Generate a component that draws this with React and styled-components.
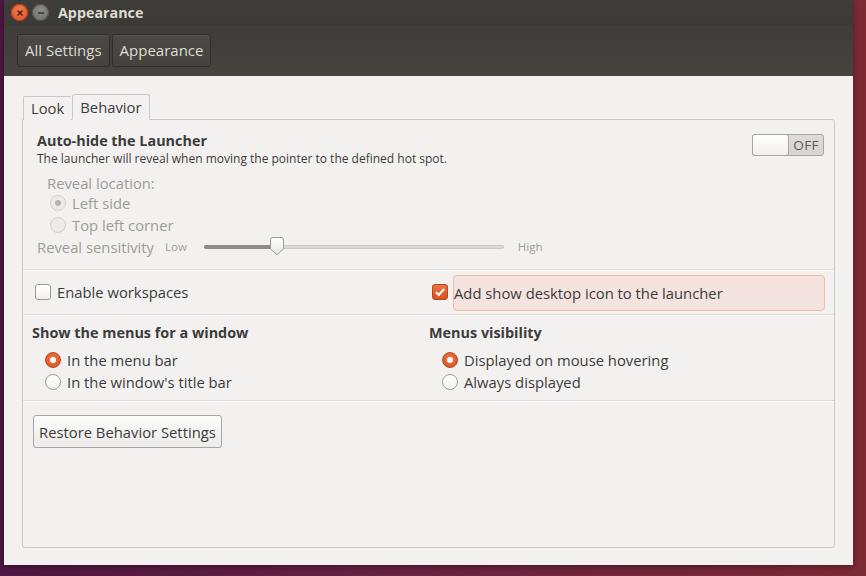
import React from "react";
import styled, { createGlobalStyle } from "styled-components";

const Global = createGlobalStyle`
  html, body { margin: 0; padding: 0; }
  body {
    width: 866px; height: 576px; overflow: hidden;
    background: linear-gradient(90deg, #4e1642 0%, #6a2240 50%, #7c2a34 100%);
    font-family: "Open Sans", "Noto Sans", sans-serif;
  }
`;

const Window = styled.div`
  margin-left: 4px;
  width: 849px;
  height: 565px;
  display: flex;
  flex-direction: column;
  background: #f2f1f0;
  box-shadow: 0 2px 6px rgba(0,0,0,0.35);
`;

const TitleBar = styled.div`
  height: 25px;
  background: linear-gradient(#3e3d39, #3b3a36);
  display: flex;
  align-items: center;
  padding-left: 7px;
  gap: 4px;
`;

const WinBtn = styled.div`
  width: 17px; height: 17px; border-radius: 50%;
  display: flex; align-items: center; justify-content: center;
  background: ${p => p.$close ? "radial-gradient(circle at 50% 35%, #f47a52, #e0501f)" : "radial-gradient(circle at 50% 35%, #8c8b86, #6c6b66)"};
  box-shadow: inset 0 0 0 1px ${p => p.$close ? "#b43c14" : "#4f4e4a"};
`;

const TitleText = styled.div`
  margin-left: 5px;
  color: #dfdbd2;
  font-weight: 700;
  font-size: 14.3px;
`;

const ToolBar = styled.div`
  height: 51px;
  box-sizing: border-box;
  background: linear-gradient(#3e3d39, #45443f);
  display: flex;
  align-items: flex-start;
  padding: 9px 0 0 13px;
  gap: 2px;
`;

const ToolButton = styled.div`
  height: 33px;
  box-sizing: border-box;
  padding: 0 7px 1px;
  border: 1px solid #2f2e2b;
  border-radius: 3px;
  background: linear-gradient(#4a4944, #44433f);
  box-shadow: inset 0 1px 0 rgba(255,255,255,0.06);
  color: #dfdbd2;
  font-size: 15px;
  display: flex; align-items: center;
`;

const Content = styled.div`
  flex: 1;
  display: flex;
  flex-direction: column;
  padding: 19px 18px 17px 18px;
  min-height: 0;
`;

const Tabs = styled.div`
  display: flex;
  align-items: flex-end;
  height: 25px;
  gap: 1px;
  padding-left: 1px;
  position: relative;
  z-index: 1;
  margin-bottom: -1px;
`;

const Tab = styled.div`
  box-sizing: border-box;
  height: ${p => p.$active ? 26 : 24}px;
  padding: 0 7px ${p => p.$active ? 0 : 1}px;
  font-size: 14.8px;
  color: #3c3c3c;
  display: flex; align-items: center;
  border: 1px solid #cbc8c4;
  border-bottom: ${p => p.$active ? "1px solid #f2f1f0" : "none"};
  border-right: ${p => p.$active ? "1px solid #cbc8c4" : "none"};
  border-radius: ${p => p.$active ? "3px 3px 0 0" : "2px 0 0 0"};
  background: #f2f1f0;
`;

const Frame = styled.div`
  flex: 1;
  border: 1px solid #cbc8c4;
  border-radius: 0 3px 3px 3px;
  display: flex;
  flex-direction: column;
`;

const Section = styled.div`
  border-bottom: ${p => p.$last ? "none" : "1px solid #dedbd8"};
  box-shadow: ${p => p.$last ? "none" : "0 1px 0 #fbfbfa"};
  ${p => p.$grow ? "flex: 1;" : ""}
  padding: ${p => p.$pad};
  box-sizing: border-box;
  height: ${p => p.$h ? p.$h + "px" : "auto"};
`;

const HeaderRow = styled.div`
  display: flex;
  justify-content: space-between;
  align-items: flex-start;
`;

const Bold = styled.div`
  font-weight: 700;
  font-size: 14.4px;
  color: #3c3c3c;
  line-height: 20px;
`;

const Sub = styled.div`
  font-size: 12px;
  color: #3c3c3c;
  line-height: 16px;
`;

const Switch = styled.div`
  width: 72px; height: 22px;
  box-sizing: border-box;
  border: 1px solid #a9a6a1;
  border-radius: 3px;
  background: linear-gradient(#dedcd8, #d6d4cf);
  display: flex;
  align-items: stretch;
  margin-top: 3px;
`;

const Knob = styled.div`
  width: 35px;
  margin: -1px 0 -1px -1px;
  border: 1px solid #a9a6a1;
  border-radius: 3px;
  background: linear-gradient(#ffffff, #f1f0ee);
`;

const SwitchLabel = styled.div`
  flex: 1;
  font-size: 13.5px;
  color: #5a5a5a;
  display: flex; align-items: center; justify-content: center;
  letter-spacing: 0.3px;
`;

const Disabled = styled.div`
  color: #9f9c98;
  font-size: 14.8px;
  line-height: ${p => p.$lh || 22}px;
  display: flex;
  align-items: center;
  gap: ${p => p.$gap || 0}px;
  padding-left: ${p => p.$indent || 0}px;
  margin-top: ${p => p.$mt || 0}px;
`;

const RadioCircle = styled.span`
  width: 16px; height: 16px; box-sizing: border-box;
  border-radius: 50%;
  display: inline-flex; align-items: center; justify-content: center;
  flex: none;
  ${p => p.$state === "on" ? `
    background: radial-gradient(circle at 50% 40%, #f07746, #d6501f);
    border: 1px solid #b5451b;
  ` : p.$state === "dis" || p.$state === "disOn" ? `
    background: #ecebe9;
    border: 1px solid #d2d0cc;
  ` : `
    background: linear-gradient(#ffffff, #f2f1ef);
    border: 1px solid #9e9b97;
  `}
`;

const Dot = styled.span`
  width: 6px; height: 6px; border-radius: 50%;
  background: ${p => p.$dis ? "#b8b5b1" : "#ffffff"};
`;

const Radio = ({ state }) => (
  <RadioCircle $state={state}>
    {state === "on" && <Dot />}
    {state === "disOn" && <Dot $dis />}
  </RadioCircle>
);

const SliderRow = styled.div`
  display: flex;
  align-items: center;
  color: #9f9c98;
  font-size: 14.8px;
  line-height: 22px;
`;

const Small = styled.span`
  font-size: 11.5px;
  color: #9f9c98;
  margin-left: ${p => p.$ml || 0}px;
`;

const Track = styled.div`
  position: relative;
  width: 300px;
  height: 4px;
  border-radius: 2px;
  background: #dcdad6;
  box-shadow: inset 0 0 0 1px #cdcac6;
  margin: 0 14px 0 17px;
`;

const Fill = styled.div`
  height: 100%;
  border-radius: 2px;
  background: #8f8c88;
`;

const Thumb = styled.svg`
  position: absolute;
  top: -8px;
  margin-left: -7px;
`;

const Row = styled.div`
  display: flex;
  align-items: center;
  height: 100%;
`;

const Half = styled.div`
  width: ${p => p.$w}px;
  display: flex;
  align-items: center;
  box-sizing: border-box;
  padding-left: ${p => p.$pl || 0}px;
`;

const CheckBox = styled.span`
  width: 16px; height: 16px; box-sizing: border-box;
  border-radius: 3px;
  flex: none;
  display: inline-flex; align-items: center; justify-content: center;
  ${p => p.$on ? `
    background: linear-gradient(#ef7443, #d7531f);
    border: 1px solid #b3461b;
  ` : `
    background: linear-gradient(#ffffff, #f1f0ee);
    border: 1px solid #9e9b97;
  `}
`;

const Label = styled.span`
  font-size: 14.8px;
  color: #3c3c3c;
  margin-left: ${p => p.$ml || 6}px;
`;

const Highlight = styled.div`
  flex: 1;
  height: 36px;
  box-sizing: border-box;
  margin-left: 5px;
  margin-right: 9px;
  margin-top: 2px;
  border: 1px solid #f2b9a3;
  border-radius: 4px;
  background: #f4e3de;
  display: flex;
  align-items: center;
  font-size: 14.8px;
  color: #3c3c3c;
`;

const Columns = styled.div`
  display: grid;
  grid-template-columns: 397px 1fr;
`;

const Col = styled.div`
  display: flex;
  flex-direction: column;
`;

const RadioList = styled.div`
  display: flex;
  flex-direction: column;
  margin-top: 6px;
  padding-left: 13px;
`;

const RadioItem = styled.div`
  display: flex;
  align-items: center;
  height: 22px;
  font-size: 14.8px;
  color: #3c3c3c;
  gap: 6px;
`;

const Button = styled.div`
  display: inline-flex;
  align-items: center;
  height: 33px;
  box-sizing: border-box;
  padding: 0 5px;
  border: 1px solid #a9a6a1;
  border-radius: 3px;
  background: linear-gradient(#fbfbfa, #ecebe9);
  font-size: 14.8px;
  color: #3c3c3c;
`;

export default function App() {
  return (
    <>
      <Global />
      <Window>
        <TitleBar>
          <WinBtn $close>
            <svg width="8" height="8" viewBox="0 0 8 8"><path d="M1.5 1.5L6.5 6.5M6.5 1.5L1.5 6.5" stroke="#3a1a0e" strokeWidth="1.4" /></svg>
          </WinBtn>
          <WinBtn>
            <svg width="8" height="8" viewBox="0 0 8 8"><path d="M1 4H7" stroke="#2e2d2a" strokeWidth="1.4" /></svg>
          </WinBtn>
          <TitleText>Appearance</TitleText>
        </TitleBar>
        <ToolBar>
          <ToolButton>All Settings</ToolButton>
          <ToolButton>Appearance</ToolButton>
        </ToolBar>
        <Content>
          <Tabs>
            <Tab>Look</Tab>
            <Tab $active>Behavior</Tab>
          </Tabs>
          <Frame>
            <Section $h={150} $pad="11px 10px 0 14px">
              <HeaderRow>
                <div>
                  <Bold>Auto-hide the Launcher</Bold>
                  <Sub>The launcher will reveal when moving the pointer to the defined hot spot.</Sub>
                </div>
                <Switch>
                  <Knob />
                  <SwitchLabel>OFF</SwitchLabel>
                </Switch>
              </HeaderRow>
              <Disabled $indent={10} $lh={17} $mt={8}>Reveal location:</Disabled>
              <Disabled $indent={13} $gap={6}><Radio state="disOn" />Left side</Disabled>
              <Disabled $indent={13} $gap={6}><Radio state="dis" />Top left corner</Disabled>
              <SliderRow>
                Reveal sensitivity
                <Small $ml={11}>Low</Small>
                <Track>
                  <Fill style={{ width: "24.5%" }} />
                  <Thumb width="14" height="18" viewBox="0 0 14 18" style={{ left: "24.5%" }}>
                    <defs>
                      <linearGradient id="tg" x1="0" y1="0" x2="0" y2="1">
                        <stop offset="0" stopColor="#ffffff" />
                        <stop offset="1" stopColor="#e8e7e4" />
                      </linearGradient>
                    </defs>
                    <path d="M3 0.5H11Q13.5 0.5 13.5 3V12L7 17.5L0.5 12V3Q0.5 0.5 3 0.5Z" fill="url(#tg)" stroke="#9e9b97" />
                  </Thumb>
                </Track>
                <Small>High</Small>
              </SliderRow>
            </Section>
            <Section $h={45} $pad="0">
              <Row>
                <Half $w={397} $pl={12}>
                  <CheckBox />
                  <Label>Enable workspaces</Label>
                </Half>
                <Half $w={414} $pl={12}>
                  <CheckBox $on>
                    <svg width="12" height="12" viewBox="0 0 12 12"><path d="M2 6.2L4.8 9L10 3" fill="none" stroke="#fff" strokeWidth="2" /></svg>
                  </CheckBox>
                  <Highlight>Add show desktop icon to the launcher</Highlight>
                </Half>
              </Row>
            </Section>
            <Section $h={86} $pad="8px 0 0 9px">
              <Columns>
                <Col>
                  <Bold>Show the menus for a window</Bold>
                  <RadioList>
                    <RadioItem><Radio state="on" />In the menu bar</RadioItem>
                    <RadioItem><Radio state="off" />In the window's title bar</RadioItem>
                  </RadioList>
                </Col>
                <Col>
                  <Bold>Menus visibility</Bold>
                  <RadioList>
                    <RadioItem><Radio state="on" />Displayed on mouse hovering</RadioItem>
                    <RadioItem><Radio state="off" />Always displayed</RadioItem>
                  </RadioList>
                </Col>
              </Columns>
            </Section>
            <Section $last $grow $pad="14px 0 0 10px">
              <Button>Restore Behavior Settings</Button>
            </Section>
          </Frame>
        </Content>
      </Window>
    </>
  );
}
